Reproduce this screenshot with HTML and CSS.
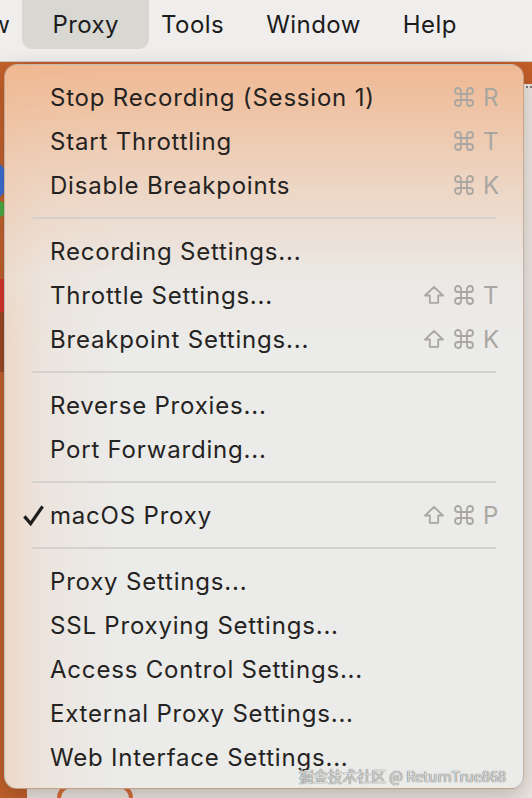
FILE: index.html
```html
<!DOCTYPE html>
<html>
<head>
<meta charset="utf-8">
<link rel="stylesheet" href="styles.css">
</head>
<body>
<div class="screen">
  <header class="menubar">
    <span class="mi first">View</span>
    <span class="mi active">Proxy</span>
    <span class="mi">Tools</span>
    <span class="mi">Window</span>
    <span class="mi">Help</span>
  </header>
  <div class="window">
    <aside class="sidebar">
      <span class="dot blue"></span>
      <span class="dot green"></span>
      <span class="bar red"></span>
      <span class="bar brown"></span>
    </aside>
    <main class="main">
      <div class="toolbar"></div>
      <div class="content">
        <div class="dots"></div>
        <div class="band"></div>
        <div class="logo"></div>
      </div>
    </main>
  </div>

  <nav class="menu">
    <div class="row"><span class="check"></span><span class="label">Stop Recording (Session 1)</span><span class="sc"><span class="mods"><svg class="cmd" viewBox="-1 -1 20 20"><path d="M6 6H12V12H6Z M6 6V3A3 3 0 1 0 3 6H6 M12 6V3A3 3 0 1 1 15 6H12 M6 12V15A3 3 0 1 1 3 12H6 M12 12V15A3 3 0 1 0 15 12H12"/></svg></span><span class="key">R</span></span></div>
    <div class="row"><span class="check"></span><span class="label">Start Throttling</span><span class="sc"><span class="mods"><svg class="cmd" viewBox="-1 -1 20 20"><path d="M6 6H12V12H6Z M6 6V3A3 3 0 1 0 3 6H6 M12 6V3A3 3 0 1 1 15 6H12 M6 12V15A3 3 0 1 1 3 12H6 M12 12V15A3 3 0 1 0 15 12H12"/></svg></span><span class="key">T</span></span></div>
    <div class="row"><span class="check"></span><span class="label">Disable Breakpoints</span><span class="sc"><span class="mods"><svg class="cmd" viewBox="-1 -1 20 20"><path d="M6 6H12V12H6Z M6 6V3A3 3 0 1 0 3 6H6 M12 6V3A3 3 0 1 1 15 6H12 M6 12V15A3 3 0 1 1 3 12H6 M12 12V15A3 3 0 1 0 15 12H12"/></svg></span><span class="key">K</span></span></div>
    <div class="sep"></div>
    <div class="row"><span class="check"></span><span class="label">Recording Settings...</span></div>
    <div class="row"><span class="check"></span><span class="label">Throttle Settings...</span><span class="sc"><span class="mods"><svg class="shift" viewBox="0 0 20 18"><path d="M10 1L19 9.5H14.2V16.8H5.8V9.5H1Z"/></svg><svg class="cmd" viewBox="-1 -1 20 20"><path d="M6 6H12V12H6Z M6 6V3A3 3 0 1 0 3 6H6 M12 6V3A3 3 0 1 1 15 6H12 M6 12V15A3 3 0 1 1 3 12H6 M12 12V15A3 3 0 1 0 15 12H12"/></svg></span><span class="key">T</span></span></div>
    <div class="row"><span class="check"></span><span class="label">Breakpoint Settings...</span><span class="sc"><span class="mods"><svg class="shift" viewBox="0 0 20 18"><path d="M10 1L19 9.5H14.2V16.8H5.8V9.5H1Z"/></svg><svg class="cmd" viewBox="-1 -1 20 20"><path d="M6 6H12V12H6Z M6 6V3A3 3 0 1 0 3 6H6 M12 6V3A3 3 0 1 1 15 6H12 M6 12V15A3 3 0 1 1 3 12H6 M12 12V15A3 3 0 1 0 15 12H12"/></svg></span><span class="key">K</span></span></div>
    <div class="sep"></div>
    <div class="row"><span class="check"></span><span class="label">Reverse Proxies...</span></div>
    <div class="row"><span class="check"></span><span class="label">Port Forwarding...</span></div>
    <div class="sep"></div>
    <div class="row"><span class="check"><svg viewBox="0 0 24 24"><path d="M2.5 13.5L9 21L21.5 3"/></svg></span><span class="label">macOS Proxy</span><span class="sc"><span class="mods"><svg class="shift" viewBox="0 0 20 18"><path d="M10 1L19 9.5H14.2V16.8H5.8V9.5H1Z"/></svg><svg class="cmd" viewBox="-1 -1 20 20"><path d="M6 6H12V12H6Z M6 6V3A3 3 0 1 0 3 6H6 M12 6V3A3 3 0 1 1 15 6H12 M6 12V15A3 3 0 1 1 3 12H6 M12 12V15A3 3 0 1 0 15 12H12"/></svg></span><span class="key">P</span></span></div>
    <div class="sep"></div>
    <div class="row"><span class="check"></span><span class="label">Proxy Settings...</span></div>
    <div class="row"><span class="check"></span><span class="label">SSL Proxying Settings...</span></div>
    <div class="row"><span class="check"></span><span class="label">Access Control Settings...</span></div>
    <div class="row"><span class="check"></span><span class="label">External Proxy Settings...</span></div>
    <div class="row"><span class="check"></span><span class="label">Web Interface Settings...</span></div>
  </nav>

  <div class="watermark">掘金技术社区 @ ReturnTrue868</div>
</div>
</body>
</html>
```

FILE: styles.css
```css
* { box-sizing: border-box; }
html, body { margin: 0; padding: 0; }
body {
  width: 532px;
  height: 798px;
  overflow: hidden;
  font-family: Inter, "Noto Sans", "Liberation Sans", sans-serif;
  background: #efeeec;
}
.screen {
  position: relative;
  width: 532px;
  height: 798px;
  display: flex;
  flex-direction: column;
  overflow: hidden;
}

/* menu bar */
.menubar {
  height: 62px;
  flex: none;
  display: flex;
  align-items: flex-start;
  background: #efeeec;
  border-bottom: 1px solid #cdcac6;
  font-size: 24px;
  letter-spacing: 0.45px;
  color: #1c1c1c;
  white-space: nowrap;
}
.mi {
  height: 49px;
  line-height: 49px;
  padding: 0 21px;
}
.mi.first { margin-left: -68px; }
.mi.active {
  padding: 0 30px;
  margin: 0 -9px;
  background: #d8d7d2;
  border-radius: 0 0 10px 10px;
}

/* window behind */
.window {
  flex: 1;
  display: flex;
  min-height: 0;
}
.sidebar {
  width: 27px;
  flex: none;
  background: #c3612c;
  display: flex;
  flex-direction: column;
  padding-top: 102px;
}
.dot { display: block; width: 14px; margin-left: -8px; border-radius: 50%; }
.dot.blue { background: #3f6fd4; height: 33px; }
.dot.green { background: #4cad45; height: 16px; margin-top: 4px; }
.bar { display: block; width: 5px; }
.bar.red { height: 33px; margin-top: 62px; background: #d9342b; }
.bar.brown { height: 60px; background: #9c4a25; }
.main {
  flex: 1;
  display: flex;
  flex-direction: column;
}
.toolbar {
  height: 22px;
  flex: none;
  background: #c35d28;
}
.content {
  flex: 1;
  background: #eee7e1;
  display: flex;
  flex-direction: column;
}
.dots {
  height: 3px;
  margin-top: 2px;
  border-top: 2px dotted #7a7a7a;
}
.band { flex: 1; }
.logo {
  width: 76px;
  height: 14px;
  margin: 0 0 0 30px;
  border: 4px solid #d9703c;
  border-bottom: none;
  border-radius: 38px 38px 0 0;
}

/* dropdown menu */
.menu {
  position: absolute;
  left: 4px;
  top: 64px;
  width: 520px;
  height: 725px;
  padding: 10px 20px 9px 0;
  border: 1px solid rgba(120, 110, 100, 0.35);
  border-radius: 13px;
  background:
    linear-gradient(to bottom, rgba(240, 182, 142, 0.95) 0px, rgba(238, 203, 178, 0.75) 110px, rgba(236, 226, 218, 0.3) 210px, rgba(235, 235, 233, 0) 280px),
    linear-gradient(to right, rgba(236, 214, 196, 0.9) 0px, rgba(236, 222, 211, 0.5) 40px, rgba(235, 235, 233, 0) 110px),
    #ebebe9;
  box-shadow: 0 8px 24px rgba(0, 0, 0, 0.22);
  font-size: 24px;
  color: #242322;
}
.row {
  height: 44px;
  display: flex;
  align-items: center;
  padding-left: 17px;
  white-space: nowrap;
}
.check {
  width: 28px;
  flex: none;
  display: flex;
  align-items: center;
}
.check svg {
  width: 23px;
  height: 24px;
  fill: none;
  stroke: #1d1d1d;
  stroke-width: 3.4;
  stroke-linejoin: miter;
}
.label { flex: 1; letter-spacing: 0.8px; }
.sc {
  display: flex;
  align-items: center;
  color: #a9a6a2;
}
.mods {
  display: flex;
  align-items: center;
  gap: 10px;
}
.mods svg.cmd {
  width: 20px;
  height: 20px;
}
.mods svg.shift {
  width: 20px;
  height: 18px;
}
.mods svg {
  fill: none;
  stroke: #aaa7a3;
  stroke-width: 1.8;
  stroke-linejoin: round;
}
.key {
  width: 20px;
  margin-left: 9px;
}
.sep {
  height: 22px;
  display: flex;
  align-items: center;
  margin: 0 0 0 27px;
  width: 464px;
}
.sep::before {
  content: "";
  display: block;
  width: 100%;
  height: 2px;
  background: #d5d2ce;
}

.watermark {
  position: absolute;
  right: 26px;
  top: 765px;
  font-family: "Noto Sans CJK SC", "Noto Sans", sans-serif;
  font-size: 14.5px;
  line-height: 22px;
  color: #d9d9d9;
  text-shadow: 0 0 1px #6f6f6f, 0 0 1px #6f6f6f;
}
```
